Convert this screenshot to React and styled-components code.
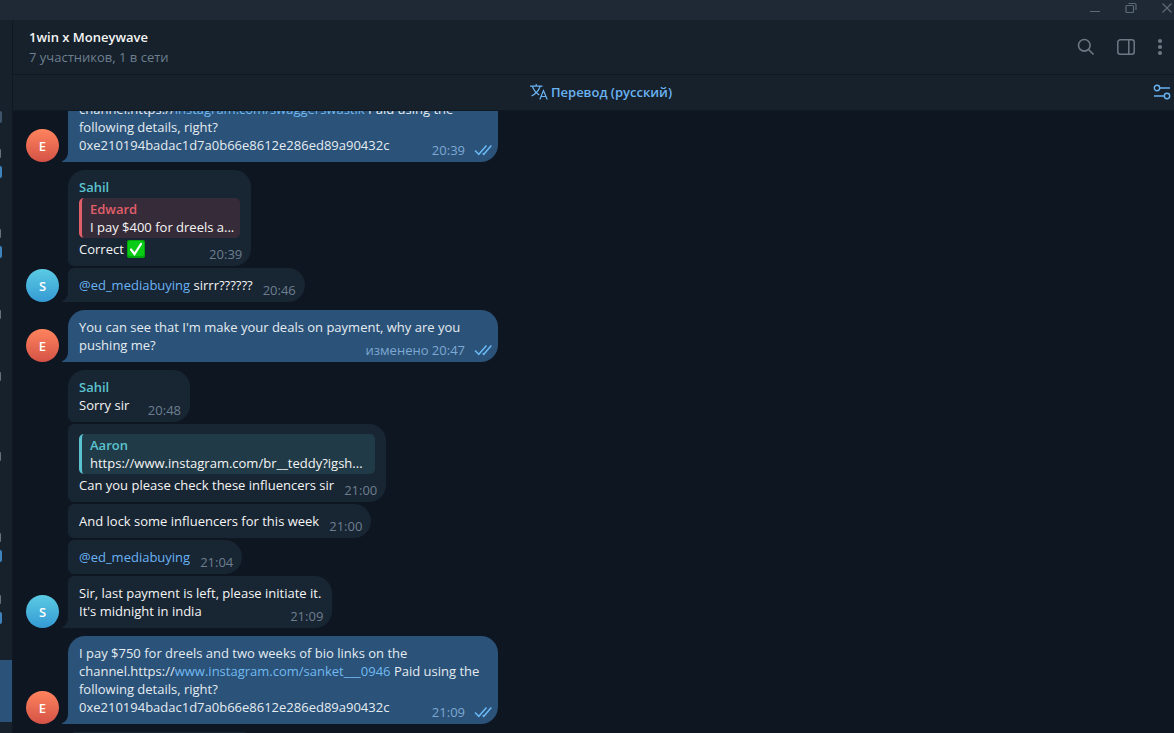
import React from "react";
import styled, { createGlobalStyle, css } from "styled-components";

const Global = createGlobalStyle`
  *, *::before, *::after { box-sizing: border-box; }
  html, body, #root { height: 100%; }
  body {
    margin: 0;
    overflow: hidden;
    background: #0e1621;
    color: #f5f5f5;
    font: 13px/18px "Open Sans", "Noto Sans", sans-serif;
  }
  button { border: 0; padding: 0; background: none; font: inherit; color: inherit; cursor: pointer; }
  svg { display: block; }
`;

const Window = styled.div`
  height: 100vh;
  display: flex;
  flex-direction: column;
`;

const TitleBar = styled.div`
  flex: none;
  height: 20px;
  background: #1f2936;
  color: #5c6a78;
  display: flex;
  justify-content: flex-end;
  align-items: flex-start;
  gap: 22px;
`;

const WindowButton = styled.button`
  width: 14px;
  height: 16px;
  display: grid;
  place-items: center;
`;

const Columns = styled.div`
  flex: 1;
  min-height: 0;
  display: flex;
`;

const ChatList = styled.nav`
  flex: none;
  width: 13px;
  background: #17212b;
  border-right: 1px solid #101921;
  display: flex;
  flex-direction: column;
  justify-content: flex-end;
  overflow: hidden;
`;

const ListRow = styled.div`
  flex: none;
  height: ${(p) => p.$height}px;
  background: ${(p) => (p.$active ? "#2b5278" : "transparent")};
  display: flex;
  flex-direction: column;
  align-items: flex-start;
  gap: 8px;
  ${(p) =>
    p.$first &&
    css`
      justify-content: flex-end;
      padding-bottom: 26px;
    `}
`;

const Badge = styled.span`
  width: 2px;
  height: 12px;
  border-radius: 0 2px 2px 0;
  background: ${(p) => (p.$muted ? "#3e546a" : "#4082bc")};
`;

const Dash = styled.span`
  width: 1px;
  height: 9px;
  border-radius: 0 2px 2px 0;
  background: #66717a;
`;

const Spacer = styled.div`
  flex: none;
  height: 11px;
`;

const Chat = styled.main`
  flex: 1;
  min-width: 0;
  display: flex;
  flex-direction: column;
`;

const Header = styled.header`
  flex: none;
  height: 55px;
  padding-left: 16px;
  background: #17212b;
  border-bottom: 1px solid #101921;
  display: flex;
  align-items: center;
  justify-content: space-between;
`;

const Title = styled.h1`
  margin: 0 0 2px;
  font-size: 13px;
  line-height: 18px;
  font-weight: 600;
`;

const Status = styled.p`
  margin: 0;
  color: #6d7f8f;
`;

const Actions = styled.div`
  display: flex;
  align-items: center;
  color: #6c7883;
`;

const IconButton = styled.button`
  width: ${(p) => p.$width}px;
  height: 36px;
  display: grid;
  place-items: center;
`;

const TranslateBar = styled.div`
  flex: none;
  height: 36px;
  background: #17212b;
  border-bottom: 1px solid #101921;
  color: #6ab3f3;
  display: grid;
  grid-template-columns: 1fr auto 1fr;
  align-items: center;
  padding: 0 3px 2px 18px;
`;

const TranslateButton = styled.button`
  grid-column: 2;
  display: flex;
  align-items: center;
  gap: 3px;
  font-weight: 600;
`;

const SettingsButton = styled.button`
  justify-self: end;
`;

const Feed = styled.section`
  flex: 1;
  min-height: 0;
  overflow: hidden;
  padding: 0 13px;
  display: flex;
  flex-direction: column;
  justify-content: flex-end;
  gap: 8px;
`;

const Group = styled.div`
  flex: none;
  display: flex;
  align-items: flex-end;
`;

const Avatar = styled.div`
  flex: none;
  width: 33px;
  height: 33px;
  margin-right: 3px;
  border-radius: 50%;
  display: grid;
  place-items: center;
  font-weight: 600;
  color: #fff;
  background: ${(p) =>
    p.$tone === "red"
      ? "linear-gradient(#ff845e, #d45246)"
      : "linear-gradient(#5bcbe3, #359ad4)"};
`;

const Tail = styled.svg`
  flex: none;
  width: 6px;
  height: 10px;
  fill: ${(p) => (p.$out ? "#2b5278" : "#182533")};
`;

const Stack = styled.div`
  min-width: 0;
  display: flex;
  flex-direction: column;
  align-items: flex-start;
  gap: 2px;
`;

const Bubble = styled.article`
  max-width: 430px;
  min-width: ${(p) => p.$minWidth || 0}px;
  padding: 8px 11px;
  border-radius: 6px 17px 17px 6px;
  background: #182533;
  &:first-child { border-top-left-radius: 17px; }
  &:last-child { border-bottom-left-radius: 0; }
  ${(p) =>
    p.$out &&
    css`
      background: #2b5278;
      color: #e4ecf2;
    `}
`;

const NextMessage = styled.div`
  flex: none;
  height: 1px;
  padding-left: 42px;
  overflow: hidden;
`;

const Sender = styled.div`
  font-weight: 600;
  color: ${(p) => (p.$tone === "red" ? "#e15f69" : "#5bc3cf")};
`;

const Quote = styled.blockquote`
  margin: 2px 0;
  height: 40px;
  padding: 2px 6px 2px 8px;
  border-left: 3px solid ${(p) => (p.$tone === "red" ? "#e15f69" : "#5bc3cf")};
  border-radius: 5px;
  background: ${(p) => (p.$tone === "red" ? "#362c39" : "#213a47")};
  white-space: nowrap;
`;

const Body = styled.div`
  display: flow-root;
`;

const Link = styled.a`
  color: ${(p) => (p.$out ? "#71baf2" : "#6ab3f3")};
  text-decoration: none;
`;

const Meta = styled.span`
  float: right;
  height: 18px;
  margin: 5px -2px -5px 10px;
  color: #6d7f8f;
  display: flex;
  ${(p) =>
    p.$out &&
    css`
      margin-right: -5px;
      color: #7da8d3;
      gap: 9px;
    `}
`;

const Ticks = styled.svg`
  margin-top: 3px;
  stroke: #6ab8f5;
`;

const Emoji = styled.svg`
  display: inline-block;
  vertical-align: top;
`;

function Sent({ time, out }) {
  return (
    <Meta $out={out}>
      <time>{time}</time>
      {out && (
        <Ticks width="18" height="12" viewBox="0 0 18 12" fill="none" strokeWidth="1.5" aria-label="Прочитано">
          <path d="M1 6.5 4.8 10.3 12.5 1.5M8.7 9.2 9.8 10.3 17.3 1.5" />
        </Ticks>
      )}
    </Meta>
  );
}

function MessageGroup({ letter, tone, out, children }) {
  return (
    <Group>
      <Avatar $tone={tone}>{letter}</Avatar>
      <Tail $out={out} viewBox="0 0 6 10" aria-hidden="true">
        <path d="M6 0C6 4 4 7.5 0 9.3V10H6Z" />
      </Tail>
      <Stack>{children}</Stack>
    </Group>
  );
}

export default function App() {
  return (
    <Window>
      <Global />
      <TitleBar>
        <WindowButton aria-label="Свернуть">
          <svg width="12" height="12" viewBox="0 0 12 12" stroke="currentColor"><path d="M1 9.5h10" /></svg>
        </WindowButton>
        <WindowButton aria-label="Развернуть">
          <svg width="12" height="12" viewBox="0 0 12 12" fill="none" stroke="currentColor" strokeWidth="1.2">
            <rect x="1" y="3.5" width="7.500" height="7" rx="1" />
            <path d="M3.500 1.500H9.500Q11 1.500 11 3V8" />
          </svg>
        </WindowButton>
        <WindowButton aria-label="Закрыть">
          <svg width="10" height="10" viewBox="0 0 10 10" stroke="currentColor" strokeWidth="1.2"><path d="M.5.5 9.5 9.5M9.5.5.5 9.5" /></svg>
        </WindowButton>
      </TitleBar>
      <Columns>
        <ChatList aria-label="Чаты">
          <ListRow $height={129} $first><Badge $muted /></ListRow>
          <ListRow $height={80}><Dash /><Badge /></ListRow>
          <ListRow $height={81}><Dash /><Badge /></ListRow>
          <ListRow $height={62}><Dash /></ListRow>
          <ListRow $height={80}><Dash /></ListRow>
          <ListRow $height={81}><Dash /></ListRow>
          <ListRow $height={62}><Dash /><Badge /></ListRow>
          <ListRow $height={65}><Dash /><Badge /></ListRow>
          <ListRow $height={62} $active />
          <Spacer />
        </ChatList>
        <Chat>
          <Header>
            <div>
              <Title>1win x Moneywave</Title>
              <Status>7 участников, 1 в сети</Status>
            </div>
            <Actions>
              <IconButton $width={40} aria-label="Поиск">
                <svg width="18" height="18" viewBox="0 0 18 18" fill="none" stroke="currentColor" strokeWidth="1.6">
                  <circle cx="7.3" cy="7.3" r="5.8" /><path d="m11.5 11.5 5 5" />
                </svg>
              </IconButton>
              <IconButton $width={40} aria-label="Информация">
                <svg width="18" height="18" viewBox="0 0 18 18" fill="none" stroke="currentColor" strokeWidth="1.5">
                  <rect x=".8" y="1.8" width="16.4" height="14.4" rx="2.5" /><path d="M11.8 2v14" />
                </svg>
              </IconButton>
              <IconButton $width={28} aria-label="Меню">
                <svg width="6" height="18" viewBox="0 0 6 18" fill="currentColor">
                  <circle cx="3" cy="3" r="2.1" /><circle cx="3" cy="9" r="2.1" /><circle cx="3" cy="15" r="2.1" />
                </svg>
              </IconButton>
            </Actions>
          </Header>
          <TranslateBar>
            <TranslateButton>
              <svg width="18" height="18" viewBox="0 0 18 18" fill="none" stroke="currentColor" strokeWidth="1.2">
                <path d="M0 3.2h12.5M6.2 1v2M2.5 3.5C4 8 7 10.500 9.300 12M10 3.500C8.700 8 5.500 11 1.500 13" />
                <path d="m9.800 16.500 3.700-9 3.700 9M11 13.500h5" />
              </svg>
              Перевод (русский)
            </TranslateButton>
            <SettingsButton aria-label="Настройки перевода">
              <svg width="18" height="16" viewBox="0 0 18 16" fill="none" stroke="currentColor" strokeWidth="1.4">
                <circle cx="4" cy="4" r="2.700" /><path d="M6.700 4H17M1 12h10.300" /><circle cx="14" cy="12" r="2.700" />
              </svg>
            </SettingsButton>
          </TranslateBar>
          <Feed>
            <MessageGroup letter="E" tone="red" out>
              <Bubble $out>
                <Body>
                  channel.https://<Link $out href="#swaggerswastik">instagram.com/swaggerswastik</Link> Paid using the following details, right? 0xe210194badac1d7a0b66e8612e286ed89a90432c
                  <Sent time="20:39" out />
                </Body>
              </Bubble>
            </MessageGroup>
            <MessageGroup letter="S" tone="cyan">
              <Bubble $minWidth={183}>
                <Sender>Sahil</Sender>
                <Quote $tone="red">
                  <Sender $tone="red">Edward</Sender>
                  I pay $400 for dreels a...
                </Quote>
                <Body>
                  Correct{" "}
                  <Emoji width="18" height="18" viewBox="0 0 18 18" role="img" aria-label="✅">
                    <rect width="18" height="18" rx="2" fill="#00a80b" />
                    <rect x="1" y="1" width="16" height="15" rx="2" fill="#0acb16" />
                    <path d="m4 9.500 3.500 4.500L14 4" fill="none" stroke="#fff" strokeWidth="2.200" strokeLinecap="round" />
                  </Emoji>
                  <Sent time="20:39" />
                </Body>
              </Bubble>
              <Bubble>
                <Body>
                  <Link href="#ed_mediabuying">@ed_mediabuying</Link> sirrr??????
                  <Sent time="20:46" />
                </Body>
              </Bubble>
            </MessageGroup>
            <MessageGroup letter="E" tone="red" out>
              <Bubble $out>
                <Body>
                  You can see that I'm make your deals on payment, why are you pushing me?
                  <Sent time="изменено 20:47" out />
                </Body>
              </Bubble>
            </MessageGroup>
            <MessageGroup letter="S" tone="cyan">
              <Bubble $minWidth={122}>
                <Sender>Sahil</Sender>
                <Body>Sorry sir<Sent time="20:48" /></Body>
              </Bubble>
              <Bubble>
                <Quote $tone="cyan">
                  <Sender>Aaron</Sender>
                  https://www.instagram.com/br__teddy?igsh...
                </Quote>
                <Body>Can you please check these influencers sir<Sent time="21:00" /></Body>
              </Bubble>
              <Bubble>
                <Body>And lock some influencers for this week<Sent time="21:00" /></Body>
              </Bubble>
              <Bubble>
                <Body><Link href="#ed_mediabuying">@ed_mediabuying</Link><Sent time="21:04" /></Body>
              </Bubble>
              <Bubble>
                <Body>
                  Sir, last payment is left, please initiate it.<br />
                  It's midnight in india
                  <Sent time="21:09" />
                </Body>
              </Bubble>
            </MessageGroup>
            <MessageGroup letter="E" tone="red" out>
              <Bubble $out>
                <Body>
                  I pay $750 for dreels and two weeks of bio links on the channel.https://<Link $out href="#sanket">www.instagram.com/sanket___0946</Link> Paid using the following details, right? 0xe210194badac1d7a0b66e8612e286ed89a90432c
                  <Sent time="21:09" out />
                </Body>
              </Bubble>
            </MessageGroup>
            <NextMessage>
              <Stack><Bubble $minWidth={183} /></Stack>
            </NextMessage>
          </Feed>
        </Chat>
      </Columns>
    </Window>
  );
}
